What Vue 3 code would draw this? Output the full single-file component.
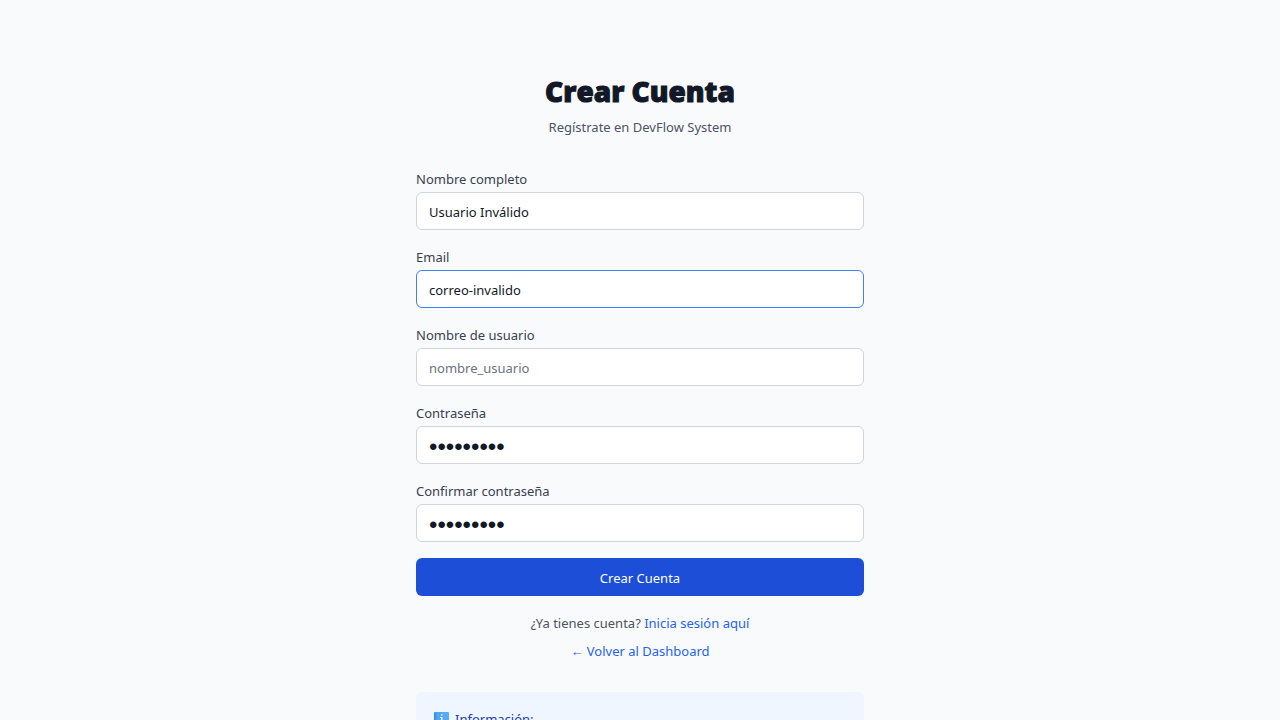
<script setup>
import { ref } from 'vue'

const fields = ref([
  { id: 'name', label: 'Nombre completo', type: 'text', value: 'Usuario Inválido', placeholder: '' },
  { id: 'email', label: 'Email', type: 'text', value: 'correo-invalido', placeholder: '', active: true },
  { id: 'username', label: 'Nombre de usuario', type: 'text', value: '', placeholder: 'nombre_usuario' },
  { id: 'password', label: 'Contraseña', type: 'password', value: '123456789', placeholder: '' },
  { id: 'confirm', label: 'Confirmar contraseña', type: 'password', value: '123456789', placeholder: '' },
])
</script>

<template>
  <main class="page">
    <div class="card">
      <header>
        <h1>Crear Cuenta</h1>
        <p class="subtitle">Regístrate en DevFlow System</p>
      </header>
      <form novalidate @submit.prevent>
        <div v-for="f in fields" :key="f.id" class="field">
          <label :for="f.id">{{ f.label }}</label>
          <input :id="f.id" v-model="f.value" :type="f.type" :placeholder="f.placeholder" :class="{ active: f.active }" />
        </div>
        <button type="submit">Crear Cuenta</button>
      </form>
      <nav class="links">
        <p>¿Ya tienes cuenta? <a href="#login">Inicia sesión aquí</a></p>
        <a href="#dashboard">← Volver al Dashboard</a>
      </nav>
      <aside class="info">
        <h2>
          <svg viewBox="0 0 15 15" aria-hidden="true">
            <defs>
              <linearGradient id="info-fill" x1="0" y1="0" x2="1" y2="0">
                <stop offset="0" stop-color="#3b82d6" />
                <stop offset="0.2" stop-color="#52a5f5" />
                <stop offset="1" stop-color="#5aabf8" />
              </linearGradient>
            </defs>
            <rect width="15" height="15" rx="1" fill="url(#info-fill)" />
            <path d="M7 2h1.5v1.5H7zM6 5h2.5v6h1v1H6v-1h1V6H6z" fill="#e6f3ff" />
          </svg>
          Información:
        </h2>
      </aside>
    </div>
  </main>
</template>

<style>
html {
  scrollbar-width: none;
}
body {
  margin: 0;
  background: #f9fafb;
}
</style>

<style scoped>
.page {
  box-sizing: border-box;
  min-height: 100vh;
  padding: 72px 16px 0;
  background: #f9fafb;
  color: #4b5563;
  font-family: "Noto Sans", "Open Sans", sans-serif;
  font-size: 13px;
  line-height: 22px;
}
.card {
  max-width: 448px;
  margin: 0 auto;
}
header {
  text-align: center;
}
h1 {
  margin: 0;
  color: #111827;
  font-family: "Open Sans", "Noto Sans", sans-serif;
  font-size: 28px;
  font-weight: 800;
  line-height: 38px;
  -webkit-text-stroke: 1px #111827;
}
.subtitle {
  margin: 6px 0 0;
}
form {
  display: flex;
  flex-direction: column;
  gap: 16px;
  margin-top: 30px;
}
.field {
  display: flex;
  flex-direction: column;
  gap: 2px;
}
label {
  color: #374151;
}
input {
  box-sizing: border-box;
  width: 100%;
  height: 38px;
  padding: 2px 12px 0;
  border: 1px solid #d1d5db;
  border-radius: 6px;
  outline: none;
  background: #fff;
  color: #111827;
  font: inherit;
}
input[type="password"] {
  padding-top: 4px;
  font-family: "Liberation Sans", sans-serif;
  font-size: 24px;
}
input::placeholder {
  color: #6b7280;
  opacity: 1;
}
input.active {
  border-color: #3b82f6;
}
button {
  height: 38px;
  padding: 2px 16px 0;
  border: 0;
  border-radius: 6px;
  background: #1d4ed8;
  color: #fff;
  font: inherit;
}
.links {
  display: flex;
  flex-direction: column;
  align-items: center;
  gap: 6px;
  margin-top: 16px;
}
.links p {
  margin: 0;
}
a {
  color: #2563eb;
  text-decoration: none;
}
.info {
  margin-top: 30px;
  padding: 16px 18px;
  border-radius: 6px;
  background: #eff6ff;
}
h2 {
  display: flex;
  align-items: center;
  gap: 6px;
  margin: 0;
  color: #1e40af;
  font-size: 13px;
  font-weight: 400;
  line-height: 22px;
}
h2 svg {
  width: 15px;
  height: 15px;
}
</style>
